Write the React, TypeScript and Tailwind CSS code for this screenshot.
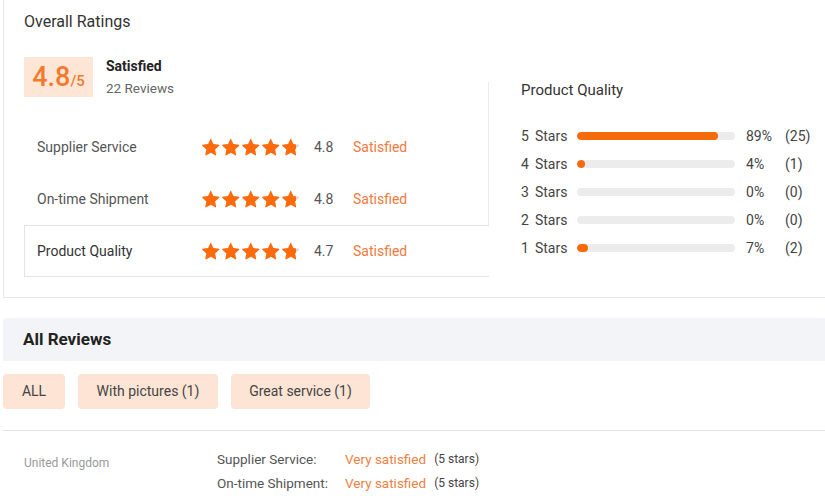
import React from "react"

const aspects = [
  { name: "Supplier Service", score: 4.8, label: "Satisfied", active: false },
  { name: "On-time Shipment", score: 4.8, label: "Satisfied", active: false },
  { name: "Product Quality", score: 4.7, label: "Satisfied", active: true },
]

const breakdown = [
  { stars: 5, pct: 89, count: 25 },
  { stars: 4, pct: 4, count: 1 },
  { stars: 3, pct: 0, count: 0 },
  { stars: 2, pct: 0, count: 0 },
  { stars: 1, pct: 7, count: 2 },
]

const filters = [
  { text: "ALL", w: "w-[62px]" },
  { text: "With pictures (1)", w: "w-[140px]" },
  { text: "Great service (1)", w: "w-[139px]" },
]

const STAR =
  "M10 1.2l2.6 5.6 6.1.7c.5.1.7.7.3 1l-4.5 4.2 1.2 6c.1.5-.4.9-.9.6L10 16.3l-5.4 3c-.5.3-1-.1-.9-.6l1.2-6L.4 8.5c-.4-.3-.2-.9.3-1l6.1-.7L9.4 1.2c.2-.5.9-.5 1.2 0z"

function Star({ fill }: { fill: number }) {
  return (
    <span className="relative inline-block w-[18px] h-[18px]">
      <svg viewBox="0 0 20 20" className="absolute inset-0 w-[18px] h-[18px]">
        <path d={STAR} fill="#d9d9d9" />
      </svg>
      <span className="absolute inset-0 overflow-hidden" style={{ width: `${fill * 100}%` }}>
        <svg viewBox="0 0 20 20" className="w-[18px] h-[18px]">
          <path d={STAR} fill="#ff6a0a" />
        </svg>
      </span>
    </span>
  )
}

function Stars({ score }: { score: number }) {
  return (
    <div className="flex items-center gap-[2px]">
      {[0, 1, 2, 3, 4].map((i) => {
        const f = Math.max(0, Math.min(1, score - i))
        // partial last star keeps most of its orange, only the tip goes grey
        return <Star key={i} fill={f === 1 ? 1 : f > 0 ? 0.55 + f * 0.3 : 0} />
      })}
    </div>
  )
}

export default function App() {
  return (
    <div className="w-[825px] h-[496px] overflow-hidden bg-white font-['Roboto','Liberation_Sans',sans-serif] text-[#333]">
      {/* Overall ratings card */}
      <section className="ml-[3px] border-l border-b border-[#e8e8e8] pl-[20px] pt-[12px] pb-[20px]">
        <h2 className="text-[16px] leading-[20px] text-[#333]">Overall Ratings</h2>

        <div className="flex mt-[25px]">
          {/* Left: summary + aspect tabs */}
          <div className="w-[464px] shrink-0">
            <div className="flex items-center gap-[13px]">
              <div className="w-[69px] h-[40px] bg-[#fde6d6] flex items-center justify-center">
                <span className="text-[27px] leading-none font-medium text-[#f27a2c]">4.8</span>
                <span className="text-[15px] leading-none font-medium text-[#f27a2c] mt-[8px]">/5</span>
              </div>
              <div>
                <p className="text-[14px] leading-[18px] font-bold text-[#222]">Satisfied</p>
                <p className="text-[13.5px] leading-[18px] text-[#666] mt-[4px]">22 Reviews</p>
              </div>
            </div>

            <div className="mt-[24px]">
              {aspects.map((a) => (
                <div
                  key={a.name}
                  className={`flex items-center h-[52px] pl-[12px] ${
                    a.active
                      ? "relative z-10 bg-white border-t border-b border-l border-[#e3e3e3] -mr-px"
                      : "border-l border-transparent"
                  }`}
                >
                  <span className={`w-[165px] text-[14px] ${a.active ? "text-[#333]" : "text-[#555]"}`}>
                    {a.name}
                  </span>
                  <Stars score={a.score} />
                  <span className="ml-[14px] w-[39px] text-[14px] text-[#555]">{a.score}</span>
                  <span className="text-[14px] text-[#f07a3e]">{a.label}</span>
                </div>
              ))}
            </div>
          </div>

          {/* Right: star breakdown */}
          <div className="mt-[25px] h-[195px] border-l border-[#ececec] pl-[32px]">
            <h3 className="text-[15px] leading-[16px] text-[#333]">Product Quality</h3>
            <div className="mt-[24px]">
              {breakdown.map((b) => (
                <div key={b.stars} className="flex items-center h-[28px] text-[14px] text-[#444]">
                  <span className="w-[56px]">
                    {b.stars}
                    <span className="ml-[6px]">Stars</span>
                  </span>
                  <div className="w-[158px] h-[8px] rounded-full bg-[#ececec] overflow-hidden">
                    {b.pct > 0 && (
                      <div
                        className="h-full rounded-full bg-[#f56b0c]"
                        style={{ width: `${Math.max(b.pct, 5)}%` }}
                      />
                    )}
                  </div>
                  <span className="ml-[11px] w-[39px]">{b.pct}%</span>
                  <span>({b.count})</span>
                </div>
              ))}
            </div>
          </div>
        </div>
      </section>

      {/* All reviews */}
      <div className="ml-[3px] mt-[20px] h-[43px] bg-[#f3f4f7] rounded-tl-[3px] flex items-center pl-[20px]">
        <h2 className="text-[17px] font-bold text-[#222]">All Reviews</h2>
      </div>

      <div className="ml-[3px] mt-[13px] flex gap-[13px]">
        {filters.map((f) => (
          <button
            key={f.text}
            className={`${f.w} h-[35px] rounded-[4px] bg-[#fde4d4] text-[14px] text-[#444]`}
          >
            {f.text}
          </button>
        ))}
      </div>

      <div className="ml-[3px] mt-[21px] border-t border-[#e3e3e3] pl-[21px] pt-[16px] flex">
        <div className="w-[193px] pt-[7px] text-[12px] text-[#999]">United Kingdom</div>
        <div className="text-[13.5px] text-[#555]">
          <div className="flex items-center h-[24px]">
            <span className="w-[128px]">Supplier Service:</span>
            <span className="text-[#f0813f]">Very satisfied</span>
            <span className="ml-[8px] text-[12px] text-[#444]">(5 stars)</span>
          </div>
          <div className="flex items-center h-[24px]">
            <span className="w-[128px]">On-time Shipment:</span>
            <span className="text-[#f0813f]">Very satisfied</span>
            <span className="ml-[8px] text-[12px] text-[#444]">(5 stars)</span>
          </div>
        </div>
      </div>
    </div>
  )
}
